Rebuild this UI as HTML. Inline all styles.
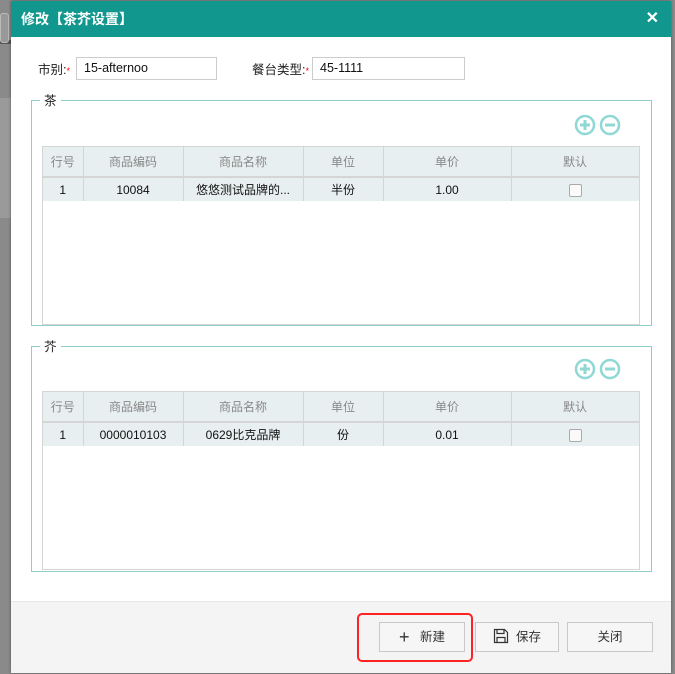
<!DOCTYPE html>
<html><head><meta charset="utf-8"><style>
*{box-sizing:border-box;margin:0;padding:0}
body{width:675px;height:674px;overflow:hidden;background:#8a8a8a;font-family:"Liberation Sans","Noto Sans CJK SC",sans-serif;position:relative;font-size:12px;color:#222}
.a{position:absolute}
.dlg{left:11px;top:1px;width:660px;height:672px;background:#fff;box-shadow:0 0 3px rgba(0,0,0,.4)}
.hd{left:0;top:0;width:660px;height:36px;background:#12978f;color:#fff;font-weight:bold;font-size:14px;line-height:36px;padding-left:10px}
.inp{border:1px solid #ccc;height:23px;line-height:21px;padding-left:7px;font-size:12.5px;color:#111;background:#fff}
.lbl{font-size:12.5px;color:#222}
.fs{border:1px solid #8ecfcc}
.lg{background:#fff;padding:0 4px;font-size:12.5px;line-height:14px}
.tb{border:1px solid #d5d5d5;background:#fff}
table{border-collapse:collapse;width:596px;table-layout:fixed}
td{text-align:center;border-right:1px solid #d5d5d5;font-size:12px}
tr.h td{height:30px;background:#e8eff0;color:#888;border-bottom:2px solid #d5d5d5}
tr.r td{height:24px;background:#e8eff0;color:#111}
.cb{display:inline-block;width:13px;height:13px;border:1px solid #aaa;border-radius:2px;background:#fafafa;vertical-align:middle}
.ft{left:0;top:600px;width:660px;height:72px;background:#f4f4f4;border-top:1px solid #e8e8e8}
.btn{border:1px solid #c8c8c8;background:#f6f6f6;height:30px;line-height:28px;text-align:center;font-size:12.5px;color:#333}
</style></head><body>
<div class="a" style="left:0;top:40px;width:11px;height:4px;background:#555"></div>
<div class="a" style="left:0;top:13px;width:9px;height:30px;border:1px solid #bbb;border-radius:3px;background:#999"></div>
<div class="a" style="left:0;top:98px;width:11px;height:120px;background:#9a9a9a"></div>
<div class="a dlg">
<div class="a hd">修改【茶芥设置】<span class="a" style="right:12px;top:0;font-size:16px">✕</span></div>
<div class="a lbl" style="left:27px;top:58px">市别:<span style="color:red;font-size:9px">*</span></div>
<div class="a inp" style="left:65px;top:56px;width:141px">15-afternoo</div>
<div class="a lbl" style="left:241px;top:58px">餐台类型:<span style="color:red;font-size:9px">*</span></div>
<div class="a inp" style="left:301px;top:56px;width:153px">45-1111</div>

<div class="a fs" style="left:20px;top:99px;width:621px;height:226px"></div>
<div class="a lg" style="left:29px;top:93px">茶</div>
<svg class="a" style="left:563px;top:113px" width="48" height="24"><circle cx="11" cy="11" r="9" fill="none" stroke="#8fd8d4" stroke-width="2.5"/><path d="M6 11h10M11 6v10" stroke="#8fd8d4" stroke-width="3"/><circle cx="36" cy="11" r="9" fill="none" stroke="#8fd8d4" stroke-width="2.5"/><path d="M31 11h10" stroke="#8fd8d4" stroke-width="3"/></svg>
<div class="a tb" style="left:31px;top:145px;width:598px;height:179px">
<table><colgroup><col style="width:40px"><col style="width:100px"><col style="width:120px"><col style="width:80px"><col style="width:128px"><col style="width:128px"></colgroup>
<tr class="h"><td>行号</td><td>商品编码</td><td>商品名称</td><td>单位</td><td>单价</td><td>默认</td></tr>
<tr class="r"><td>1</td><td>10084</td><td>悠悠测试品牌的...</td><td>半份</td><td>1.00</td><td><span class="cb"></span></td></tr></table></div>

<div class="a fs" style="left:20px;top:345px;width:621px;height:226px"></div>
<div class="a lg" style="left:29px;top:339px">芥</div>
<svg class="a" style="left:563px;top:357px" width="48" height="24"><circle cx="11" cy="11" r="9" fill="none" stroke="#8fd8d4" stroke-width="2.5"/><path d="M6 11h10M11 6v10" stroke="#8fd8d4" stroke-width="3"/><circle cx="36" cy="11" r="9" fill="none" stroke="#8fd8d4" stroke-width="2.5"/><path d="M31 11h10" stroke="#8fd8d4" stroke-width="3"/></svg>
<div class="a tb" style="left:31px;top:390px;width:598px;height:179px">
<table><colgroup><col style="width:40px"><col style="width:100px"><col style="width:120px"><col style="width:80px"><col style="width:128px"><col style="width:128px"></colgroup>
<tr class="h"><td>行号</td><td>商品编码</td><td>商品名称</td><td>单位</td><td>单价</td><td>默认</td></tr>
<tr class="r"><td>1</td><td>0000010103</td><td>0629比克品牌</td><td>份</td><td>0.01</td><td><span class="cb"></span></td></tr></table></div>

<div class="a ft"></div>
<div class="a btn" style="left:368px;top:621px;width:86px"><span style="font-size:18px;font-weight:300;vertical-align:-2px">+</span>&nbsp;&nbsp;&nbsp;新建</div>
<div class="a btn" style="left:464px;top:621px;width:84px"><svg width="16" height="16" style="vertical-align:-3px"><path d="M1.5 1.5h10l3 3v10h-13z M4 1.5v4h7v-4 M4 14.5v-5h8v5" fill="none" stroke="#333" stroke-width="1.2"/></svg>&nbsp;&nbsp;保存</div>
<div class="a btn" style="left:556px;top:621px;width:86px">关闭</div>
<div class="a" style="left:346px;top:612px;width:116px;height:49px;border:2px solid #f22;border-radius:5px"></div>
</div>
</body></html>
